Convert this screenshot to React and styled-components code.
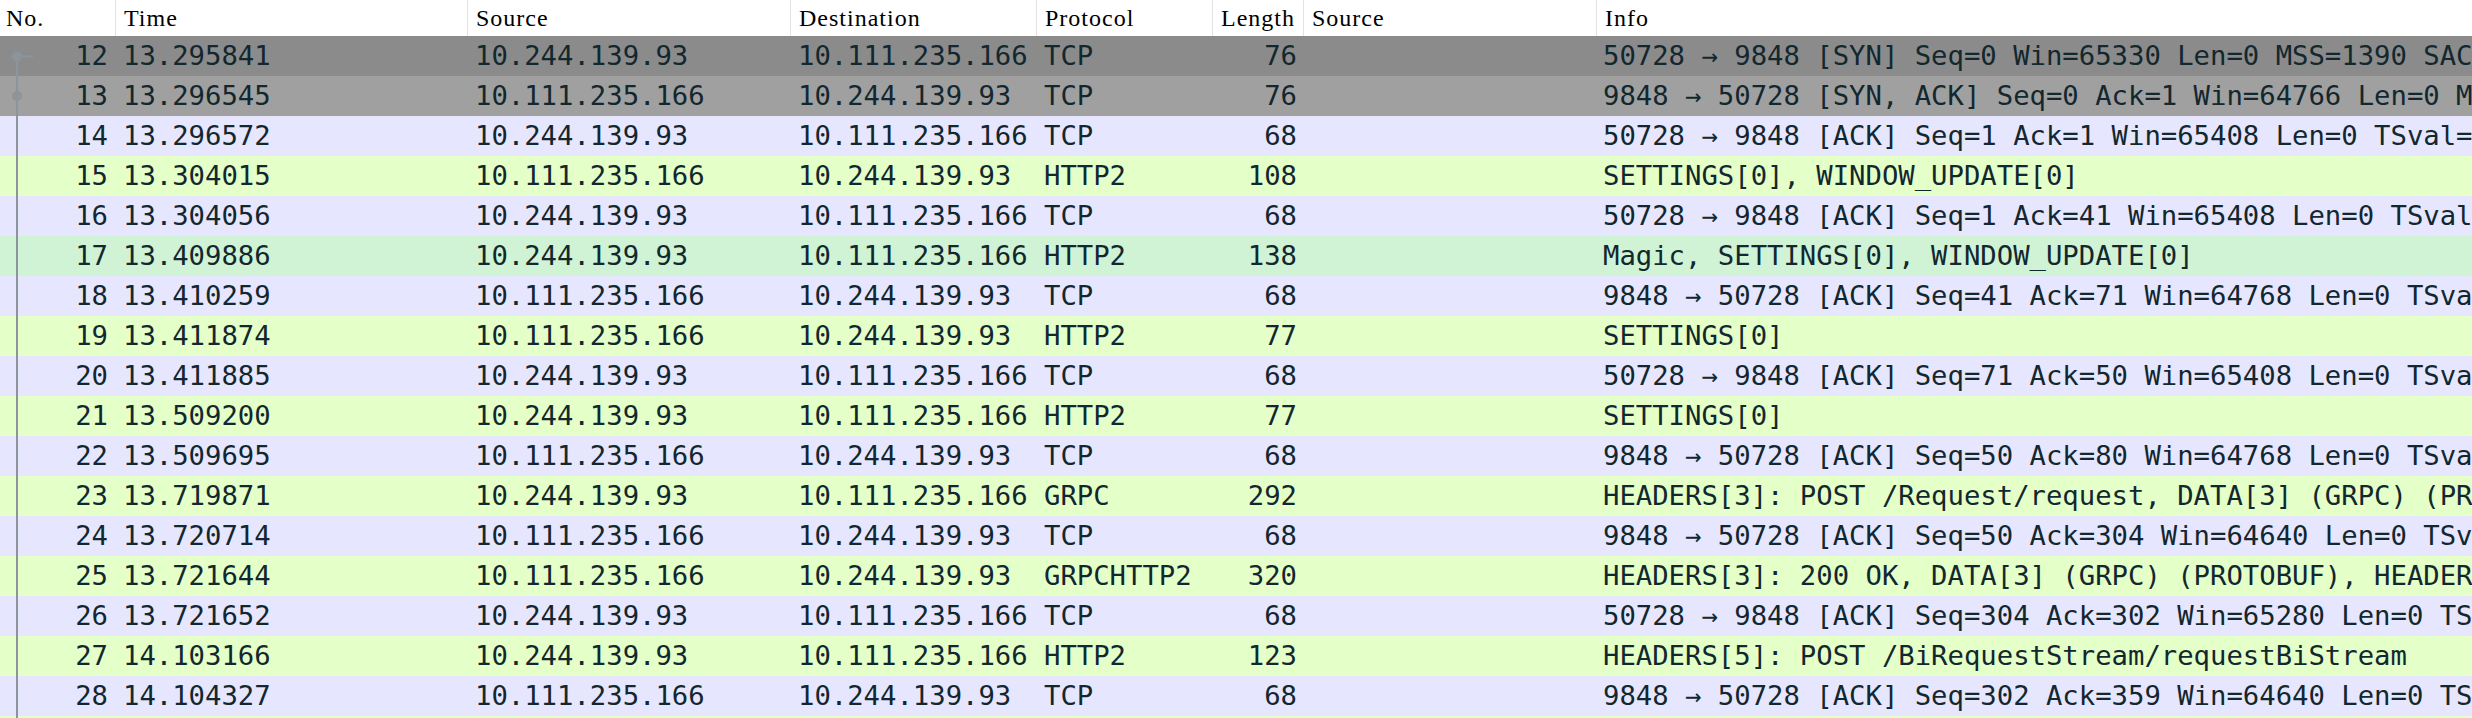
import React from "react";
import styled, { createGlobalStyle } from "styled-components";

const COLUMNS = "115px 352px 323px 246px 176px 91px 293px 1fr";

const ROW_BG = {
  selected: "#8b8b8b",
  syn: "#a0a0a0",
  tcp: "#e7e6ff",
  http: "#e4ffc7",
  magic: "#cff3d4",
};

const packets = [
  { no: 12, time: "13.295841", src: "10.244.139.93", dst: "10.111.235.166", proto: "TCP", len: 76, kind: "selected", mark: "start", info: "50728 → 9848 [SYN] Seq=0 Win=65330 Len=0 MSS=1390 SACK_PERM TSval=3214 TSecr=0 WS=128" },
  { no: 13, time: "13.296545", src: "10.111.235.166", dst: "10.244.139.93", proto: "TCP", len: 76, kind: "syn", mark: "dot", info: "9848 → 50728 [SYN, ACK] Seq=0 Ack=1 Win=64766 Len=0 MSS=1390 SACK_PERM TSval=1190" },
  { no: 14, time: "13.296572", src: "10.244.139.93", dst: "10.111.235.166", proto: "TCP", len: 68, kind: "tcp", info: "50728 → 9848 [ACK] Seq=1 Ack=1 Win=65408 Len=0 TSval=3214 TSecr=1190" },
  { no: 15, time: "13.304015", src: "10.111.235.166", dst: "10.244.139.93", proto: "HTTP2", len: 108, kind: "http", info: "SETTINGS[0], WINDOW_UPDATE[0]" },
  { no: 16, time: "13.304056", src: "10.244.139.93", dst: "10.111.235.166", proto: "TCP", len: 68, kind: "tcp", info: "50728 → 9848 [ACK] Seq=1 Ack=41 Win=65408 Len=0 TSval=3214 TSecr=1190" },
  { no: 17, time: "13.409886", src: "10.244.139.93", dst: "10.111.235.166", proto: "HTTP2", len: 138, kind: "magic", info: "Magic, SETTINGS[0], WINDOW_UPDATE[0]" },
  { no: 18, time: "13.410259", src: "10.111.235.166", dst: "10.244.139.93", proto: "TCP", len: 68, kind: "tcp", info: "9848 → 50728 [ACK] Seq=41 Ack=71 Win=64768 Len=0 TSval=1190 TSecr=3214" },
  { no: 19, time: "13.411874", src: "10.111.235.166", dst: "10.244.139.93", proto: "HTTP2", len: 77, kind: "http", info: "SETTINGS[0]" },
  { no: 20, time: "13.411885", src: "10.244.139.93", dst: "10.111.235.166", proto: "TCP", len: 68, kind: "tcp", info: "50728 → 9848 [ACK] Seq=71 Ack=50 Win=65408 Len=0 TSval=3214 TSecr=1190" },
  { no: 21, time: "13.509200", src: "10.244.139.93", dst: "10.111.235.166", proto: "HTTP2", len: 77, kind: "http", info: "SETTINGS[0]" },
  { no: 22, time: "13.509695", src: "10.111.235.166", dst: "10.244.139.93", proto: "TCP", len: 68, kind: "tcp", info: "9848 → 50728 [ACK] Seq=50 Ack=80 Win=64768 Len=0 TSval=1190 TSecr=3214" },
  { no: 23, time: "13.719871", src: "10.244.139.93", dst: "10.111.235.166", proto: "GRPC", len: 292, kind: "http", info: "HEADERS[3]: POST /Request/request, DATA[3] (GRPC) (PROTOBUF)" },
  { no: 24, time: "13.720714", src: "10.111.235.166", dst: "10.244.139.93", proto: "TCP", len: 68, kind: "tcp", info: "9848 → 50728 [ACK] Seq=50 Ack=304 Win=64640 Len=0 TSval=1190 TSecr=3214" },
  { no: 25, time: "13.721644", src: "10.111.235.166", dst: "10.244.139.93", proto: "GRPCHTTP2", len: 320, kind: "http", info: "HEADERS[3]: 200 OK, DATA[3] (GRPC) (PROTOBUF), HEADERS[3]" },
  { no: 26, time: "13.721652", src: "10.244.139.93", dst: "10.111.235.166", proto: "TCP", len: 68, kind: "tcp", info: "50728 → 9848 [ACK] Seq=304 Ack=302 Win=65280 Len=0 TSval=3214 TSecr=1190" },
  { no: 27, time: "14.103166", src: "10.244.139.93", dst: "10.111.235.166", proto: "HTTP2", len: 123, kind: "http", info: "HEADERS[5]: POST /BiRequestStream/requestBiStream" },
  { no: 28, time: "14.104327", src: "10.111.235.166", dst: "10.244.139.93", proto: "TCP", len: 68, kind: "tcp", info: "9848 → 50728 [ACK] Seq=302 Ack=359 Win=64640 Len=0 TSval=1190 TSecr=3214" },
  { no: 29, time: "14.512040", src: "10.244.139.93", dst: "10.111.235.166", proto: "HTTP2", len: 85, kind: "http", info: "PING[0]" },
];

const headers = ["No.", "Time", "Source", "Destination", "Protocol", "Length", "Source", "Info"];

function Tree({ mark }) {
  const stroke = "#8b959b";
  return (
    <TreeSvg width="34" height="40" viewBox="0 0 34 40">
      {mark === "start" ? (
        <>
          <line x1="17" y1="20.5" x2="17" y2="40" stroke={stroke} strokeWidth="2" />
          <line x1="17" y1="20.5" x2="33" y2="20.5" stroke={stroke} strokeWidth="2" />
          <circle cx="17" cy="20.5" r="5" fill={stroke} />
        </>
      ) : (
        <>
          <line x1="17" y1="0" x2="17" y2="40" stroke={stroke} strokeWidth="2" />
          {mark === "dot" && <circle cx="17" cy="20" r="5" fill={stroke} />}
        </>
      )}
    </TreeSvg>
  );
}

export default function App() {
  return (
    <>
      <GlobalStyle />
      <PacketList>
        <HeaderRow>
          {headers.map((h, i) => (
            <HeaderCell key={i} $first={i === 0}>{h}</HeaderCell>
          ))}
        </HeaderRow>
        {packets.map((p) => (
          <Row key={p.no} $bg={ROW_BG[p.kind]}>
            <NoCell>
              <Tree mark={p.mark} />
              <span>{p.no}</span>
            </NoCell>
            <Cell>{p.time}</Cell>
            <Cell>{p.src}</Cell>
            <Cell>{p.dst}</Cell>
            <Cell>{p.proto}</Cell>
            <Cell $right>{p.len}</Cell>
            <Cell />
            <Cell $info>{p.info}</Cell>
          </Row>
        ))}
      </PacketList>
    </>
  );
}

const GlobalStyle = createGlobalStyle`
  html, body {
    margin: 0;
    padding: 0;
    background: #fff;
    overflow: hidden;
  }
`;

const PacketList = styled.div`
  width: 2472px;
  height: 718px;
  overflow: hidden;
  background: #fff;
`;

const HeaderRow = styled.div`
  display: grid;
  grid-template-columns: ${COLUMNS};
  height: 36px;
  background: #fff;
`;

const HeaderCell = styled.div`
  border-left: ${(p) => (p.$first ? "none" : "1px solid #e3e3e3")};
  padding-left: ${(p) => (p.$first ? "6px" : "8px")};
  font-family: "Liberation Serif", serif;
  font-size: 24px;
  letter-spacing: 1px;
  line-height: 36px;
  color: #000;
  white-space: nowrap;
  overflow: hidden;
`;

const Row = styled.div`
  display: grid;
  grid-template-columns: ${COLUMNS};
  height: 40px;
  background: ${(p) => p.$bg};
  color: #12272e;
  font-family: "DejaVu Sans Mono", monospace;
  font-size: 27.25px;
  line-height: 40px;
`;

const Cell = styled.div`
  padding: ${(p) => (p.$right ? "0 6px 0 0" : "0 0 0 8px")};
  text-align: ${(p) => (p.$right ? "right" : "left")};
  padding-left: ${(p) => (p.$info ? "7px" : undefined)};
  white-space: nowrap;
  overflow: hidden;
`;

const NoCell = styled.div`
  display: flex;
  align-items: center;
  justify-content: space-between;
  padding-right: 7px;
  white-space: nowrap;
  overflow: hidden;
`;

const TreeSvg = styled.svg`
  display: block;
  flex-shrink: 0;
`;
